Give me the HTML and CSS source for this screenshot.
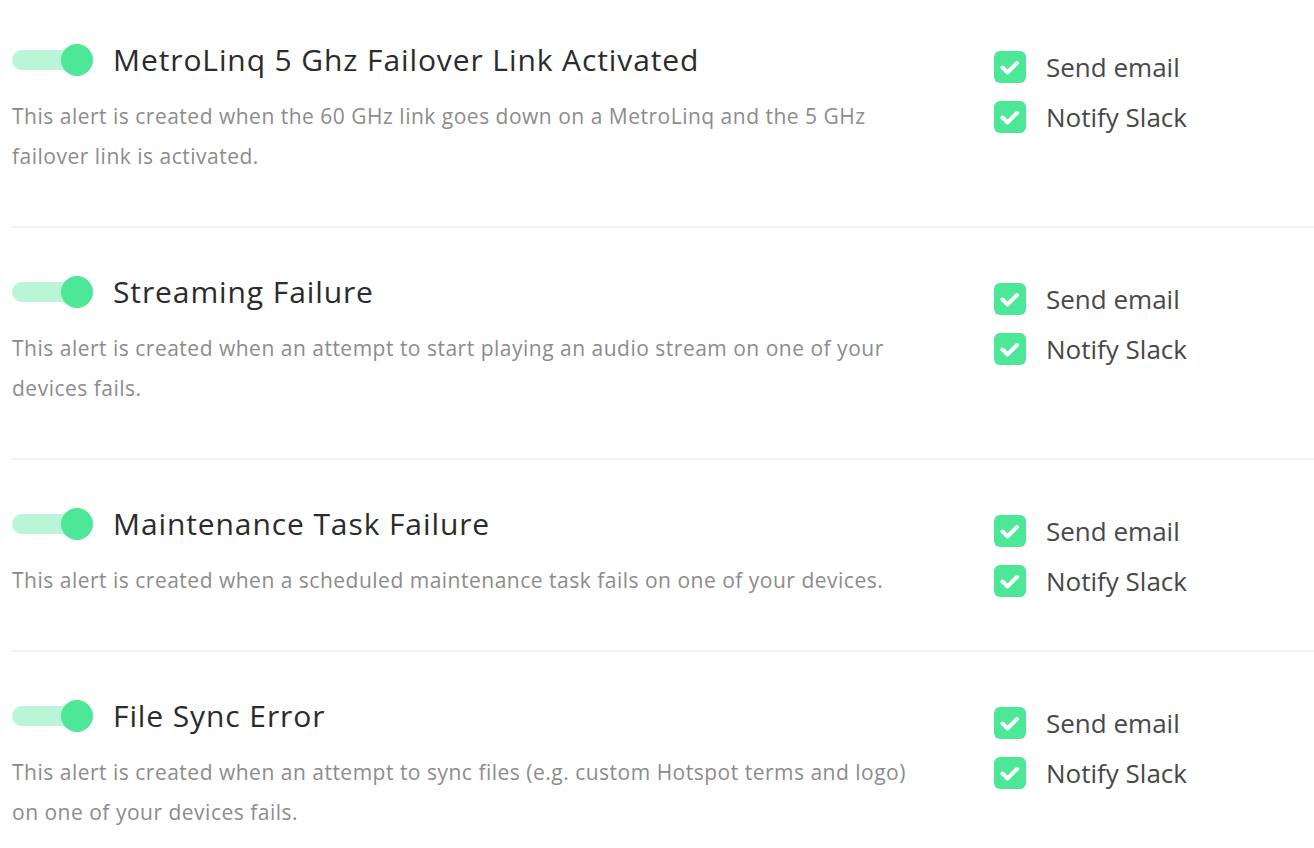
FILE: index.html
```html
<!DOCTYPE html>
<html>
<head>
<meta charset="utf-8">
<link rel="stylesheet" href="styles.css">
</head>
<body>
<div class="list">
  <div class="row first">
    <div class="main">
      <div class="head"><span class="toggle"><span class="knob"></span></span><h2 class="title">MetroLinq 5 Ghz Failover Link Activated</h2></div>
      <p class="desc">This alert is created when the 60 GHz link goes down on a MetroLinq and the 5 GHz failover link is activated.</p>
    </div>
    <div class="opts">
      <label class="opt"><span class="box"><svg viewBox="0 0 32 32" width="32" height="32"><path d="M8.5 16.5 L13.5 21.5 L23 12" fill="none" stroke="#fff" stroke-width="4" stroke-linecap="round" stroke-linejoin="round"/></svg></span>Send email</label>
      <label class="opt"><span class="box"><svg viewBox="0 0 32 32" width="32" height="32"><path d="M8.5 16.5 L13.5 21.5 L23 12" fill="none" stroke="#fff" stroke-width="4" stroke-linecap="round" stroke-linejoin="round"/></svg></span>Notify Slack</label>
    </div>
  </div>
  <div class="row">
    <div class="main">
      <div class="head"><span class="toggle"><span class="knob"></span></span><h2 class="title">Streaming Failure</h2></div>
      <p class="desc">This alert is created when an attempt to start playing an audio stream on one of your devices fails.</p>
    </div>
    <div class="opts">
      <label class="opt"><span class="box"><svg viewBox="0 0 32 32" width="32" height="32"><path d="M8.5 16.5 L13.5 21.5 L23 12" fill="none" stroke="#fff" stroke-width="4" stroke-linecap="round" stroke-linejoin="round"/></svg></span>Send email</label>
      <label class="opt"><span class="box"><svg viewBox="0 0 32 32" width="32" height="32"><path d="M8.5 16.5 L13.5 21.5 L23 12" fill="none" stroke="#fff" stroke-width="4" stroke-linecap="round" stroke-linejoin="round"/></svg></span>Notify Slack</label>
    </div>
  </div>
  <div class="row">
    <div class="main">
      <div class="head"><span class="toggle"><span class="knob"></span></span><h2 class="title">Maintenance Task Failure</h2></div>
      <p class="desc">This alert is created when a scheduled maintenance task fails on one of your devices.</p>
    </div>
    <div class="opts">
      <label class="opt"><span class="box"><svg viewBox="0 0 32 32" width="32" height="32"><path d="M8.5 16.5 L13.5 21.5 L23 12" fill="none" stroke="#fff" stroke-width="4" stroke-linecap="round" stroke-linejoin="round"/></svg></span>Send email</label>
      <label class="opt"><span class="box"><svg viewBox="0 0 32 32" width="32" height="32"><path d="M8.5 16.5 L13.5 21.5 L23 12" fill="none" stroke="#fff" stroke-width="4" stroke-linecap="round" stroke-linejoin="round"/></svg></span>Notify Slack</label>
    </div>
  </div>
  <div class="row">
    <div class="main">
      <div class="head"><span class="toggle"><span class="knob"></span></span><h2 class="title">File Sync Error</h2></div>
      <p class="desc">This alert is created when an attempt to sync files (e.g. custom Hotspot terms and logo) on one of your devices fails.</p>
    </div>
    <div class="opts">
      <label class="opt"><span class="box"><svg viewBox="0 0 32 32" width="32" height="32"><path d="M8.5 16.5 L13.5 21.5 L23 12" fill="none" stroke="#fff" stroke-width="4" stroke-linecap="round" stroke-linejoin="round"/></svg></span>Send email</label>
      <label class="opt"><span class="box"><svg viewBox="0 0 32 32" width="32" height="32"><path d="M8.5 16.5 L13.5 21.5 L23 12" fill="none" stroke="#fff" stroke-width="4" stroke-linecap="round" stroke-linejoin="round"/></svg></span>Notify Slack</label>
    </div>
  </div>
</div>
</body>
</html>
```
FILE: styles.css
```css
html, body {
  margin: 0;
  padding: 0;
  background: #fff;
  font-family: "Open Sans", "Noto Sans", sans-serif;
  overflow: hidden;
}
.list {
  margin-left: 12px;
}
.row {
  display: flex;
  padding: 44px 0 50px 0;
  border-bottom: 2px solid #f2f2f2;
}
.row.first {
  padding-top: 40px;
}
.main {
  flex: 0 0 982px;
}
.head {
  display: flex;
  align-items: center;
  gap: 20px;
  height: 40px;
}
.toggle {
  position: relative;
  flex: 0 0 81px;
  height: 20px;
  border-radius: 10px;
  background: #b9f5d6;
}
.knob {
  position: absolute;
  right: 0;
  top: -6px;
  width: 32px;
  height: 32px;
  border-radius: 50%;
  background: #4de798;
}
.title {
  margin: 0;
  font-size: 30px;
  font-weight: 400;
  line-height: 40px;
  letter-spacing: 0.9px;
  color: #2b2b2b;
}
.desc {
  margin: 16px 0 0;
  max-width: 920px;
  font-size: 21px;
  line-height: 40px;
  letter-spacing: 0.5px;
  color: #8c8c8c;
}
.opts {
  display: flex;
  flex-direction: column;
  gap: 18px;
  padding-top: 11px;
}
.opt {
  display: flex;
  align-items: center;
  gap: 20px;
  height: 32px;
  font-size: 26px;
  line-height: 32px;
  color: #484848;
}
.box {
  width: 32px;
  height: 32px;
  border-radius: 6px;
  background: #4de798;
  display: block;
}
.box svg {
  display: block;
}
```
